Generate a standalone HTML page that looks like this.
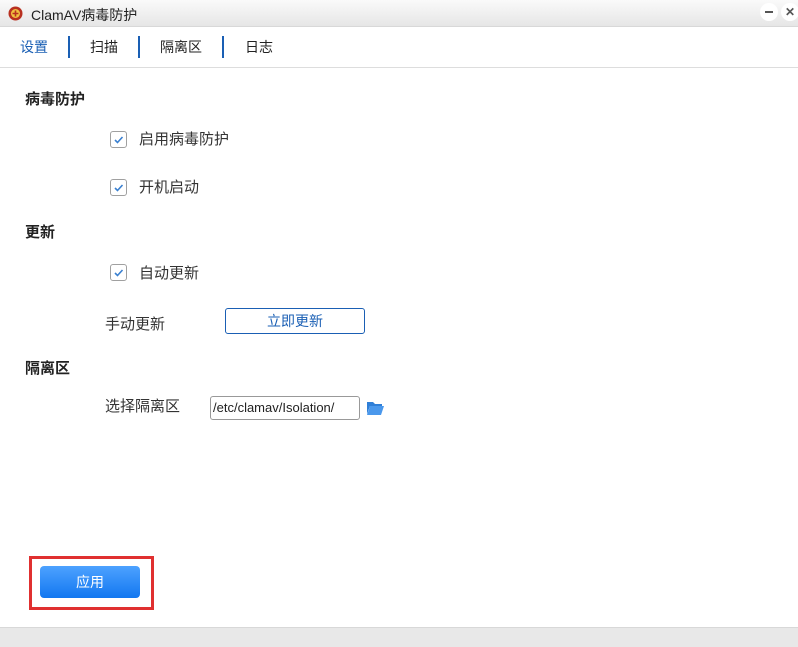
<!DOCTYPE html>
<html><head><meta charset="utf-8"><style>
body{margin:0;width:798px;height:646px;position:relative;background:#fff;font-family:"Liberation Sans","Noto Sans CJK SC",sans-serif;overflow:hidden;color:#333}
.a{position:absolute}
.title{left:0;top:0;width:798px;height:26px;background:linear-gradient(#fafafa,#e6e6e6);border-bottom:1px solid #d8d8d8}
.t{font-size:14px;white-space:nowrap}
.f{font-size:15px;white-space:nowrap}
.cb{width:17px;height:17px;border:1px solid #a0a0a0;border-radius:3px;background:#fff;box-sizing:border-box}
.ck{width:17px;height:17px}
.h{font-size:15px;font-weight:bold;color:#222}
.sep{width:2px;height:22px;background:#1a5fb4;top:36px}
</style></head><body>
<div class="a title"></div>
<svg class="a" style="left:8px;top:6px" width="15" height="15" viewBox="0 0 15 15"><circle cx="7.5" cy="7.5" r="7" fill="#b83020"/><circle cx="7.5" cy="7.5" r="4.5" fill="#f0c040"/><path d="M7.5 4.5v6M4.5 7.5h6" stroke="#b83020" stroke-width="1.6"/></svg>
<div class="a t" style="left:31px;top:5px;color:#222">ClamAV病毒防护</div>
<div class="a" style="left:760px;top:3px;width:18px;height:18px;border-radius:9px;background:#fff"></div>
<div class="a" style="left:765px;top:11px;width:8px;height:2px;background:#555"></div>
<div class="a" style="left:781px;top:3px;width:18px;height:18px;border-radius:9px;background:#fff;text-align:center;font-size:12px;line-height:18px;color:#555;font-weight:bold">✕</div>
<div class="a t" style="left:20px;top:37px;color:#1a5fb4">设置</div>
<div class="a sep" style="left:68px"></div>
<div class="a t" style="left:90px;top:37px;color:#222">扫描</div>
<div class="a sep" style="left:138px"></div>
<div class="a t" style="left:160px;top:37px;color:#222">隔离区</div>
<div class="a sep" style="left:222px"></div>
<div class="a t" style="left:245px;top:37px;color:#222">日志</div>
<div class="a" style="left:0;top:67px;width:798px;height:1px;background:#ddd"></div>
<div class="a h" style="left:25px;top:88px">病毒防护</div>
<div class="a cb" style="left:110px;top:131px"></div><svg class="a ck" style="left:110px;top:131px" viewBox="0 0 17 17"><path d="M5 9l2.5 2.5L12.5 6" fill="none" stroke="#3a80d0" stroke-width="1.6"/></svg>
<div class="a f" style="left:139px;top:128px">启用病毒防护</div>
<div class="a cb" style="left:110px;top:179px"></div><svg class="a ck" style="left:110px;top:179px" viewBox="0 0 17 17"><path d="M5 9l2.5 2.5L12.5 6" fill="none" stroke="#3a80d0" stroke-width="1.6"/></svg>
<div class="a f" style="left:139px;top:176px">开机启动</div>
<div class="a h" style="left:25px;top:221px">更新</div>
<div class="a cb" style="left:110px;top:264px"></div><svg class="a ck" style="left:110px;top:264px" viewBox="0 0 17 17"><path d="M5 9l2.5 2.5L12.5 6" fill="none" stroke="#3a80d0" stroke-width="1.6"/></svg>
<div class="a f" style="left:139px;top:262px">自动更新</div>
<div class="a f" style="left:105px;top:313px">手动更新</div>
<div class="a" style="left:225px;top:308px;width:140px;height:26px;border:1px solid #1a5fb4;border-radius:3px;box-sizing:border-box;text-align:center;line-height:24px;font-size:14px;color:#1a5fb4">立即更新</div>
<div class="a h" style="left:25px;top:357px">隔离区</div>
<div class="a f" style="left:105px;top:395px">选择隔离区</div>
<div class="a" style="left:210px;top:396px;width:150px;height:24px;border:1px solid #999;border-radius:3px;box-sizing:border-box;font-size:13px;line-height:22px;padding-left:2px;color:#222">/etc/clamav/Isolation/</div>
<svg class="a" style="left:367px;top:401px" width="17" height="14" viewBox="0 0 17 14"><path d="M0 1h6l2 2h7v2H3L0 13z" fill="#2f7fd8"/><path d="M3 5h14l-3 9H0z" fill="#4a98ec"/></svg>
<div class="a" style="left:29px;top:556px;width:125px;height:54px;border:3px solid #e03030;box-sizing:border-box"></div>
<div class="a" style="left:40px;top:566px;width:100px;height:32px;border-radius:4px;background:linear-gradient(#4da2ff,#1277f0);color:#fff;font-size:14px;text-align:center;line-height:32px">应用</div>
<div class="a" style="left:0;top:627px;width:798px;height:19px;background:#e8e8e8;border-top:1px solid #d8d8d8"></div>
</body></html>
